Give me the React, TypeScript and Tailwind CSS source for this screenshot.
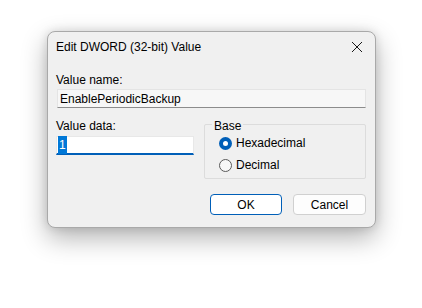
import { useState } from "react";

function Radio({ checked, label, onSelect }: { checked: boolean; label: string; onSelect: () => void }) {
  return (
    <button type="button" onClick={onSelect} className="flex h-[22px] items-center gap-[4px] text-[12px] text-black">
      {checked ? (
        <span className="flex h-[13px] w-[13px] items-center justify-center rounded-full bg-[#005fb8]">
          <span className="h-[5px] w-[5px] rounded-full bg-white" />
        </span>
      ) : (
        <span className="h-[13px] w-[13px] rounded-full border border-[#5a5a5a] bg-[#f7f7f7]" />
      )}
      <span>{label}</span>
    </button>
  );
}

export default function App() {
  const [base, setBase] = useState<"hex" | "dec">("hex");

  return (
    <div className="h-[308px] w-[422px] bg-white pl-[47px] pt-[31px] font-['Liberation_Sans',Arial,sans-serif]">
      <div className="flex h-[197px] w-[329px] flex-col rounded-[8px] border border-[#a9a9a9] bg-[#f0f0f0] shadow-[0_10px_26px_rgba(0,0,0,0.3),0_0_10px_rgba(0,0,0,0.12)]">
        {/* title bar */}
        <div className="flex h-[28px] items-center justify-between pl-[8px] pr-[10px] pt-[2px]">
          <span className="text-[12px] text-black">Edit DWORD (32-bit) Value</span>
          <svg width="12" height="12" viewBox="0 0 12 12" className="mr-[2px]">
            <path d="M1 1 L11 11 M11 1 L1 11" stroke="#1a1a1a" strokeWidth="1" fill="none" />
          </svg>
        </div>

        <div className="flex flex-col px-[8px] pt-[13px]">
          <span className="text-[12px] leading-[14px] text-black">Value name:</span>
          <div className="ml-[1px] mt-[2px] flex h-[19px] w-[309px] items-center border border-[#e4e4e4] border-b-[#8c8c8c] bg-[#f7f7f7] px-[2px] text-[12px] text-black">
            EnablePeriodicBackup
          </div>

          <div className="mt-[11px] flex gap-[10px]">
            <div className="flex w-[138px] flex-col">
              <span className="text-[12px] leading-[14px] text-black">Value data:</span>
              <div className="mt-[3px] flex h-[19px] items-center border border-[#e8e8e8] border-b-2 border-b-[#005fb8] bg-white px-[1px] text-[12px]">
                <span className="bg-[#0078d7] px-[1px] text-white">1</span>
              </div>
            </div>

            <fieldset className="relative mt-[5px] h-[55px] w-[162px] rounded-[2px] border border-[#dcdcdc] px-[14px] pt-[7px]">
              <legend className="absolute -top-[8px] left-[7px] bg-[#f0f0f0] px-[2px] text-[12px] text-black">Base</legend>
              <div className="flex flex-col">
                <Radio checked={base === "hex"} label="Hexadecimal" onSelect={() => setBase("hex")} />
                <Radio checked={base === "dec"} label="Decimal" onSelect={() => setBase("dec")} />
              </div>
            </fieldset>
          </div>

          <div className="mt-[15px] flex justify-end gap-[11px] pr-[1px]">
            <button type="button" className="h-[21px] w-[72px] rounded-[4px] border border-[#005fb8] bg-white text-[12px] text-black">OK</button>
            <button type="button" className="h-[21px] w-[73px] rounded-[4px] border border-[#d0d0d0] bg-[#fdfdfd] text-[12px] text-black">Cancel</button>
          </div>
        </div>
      </div>
    </div>
  );
}
